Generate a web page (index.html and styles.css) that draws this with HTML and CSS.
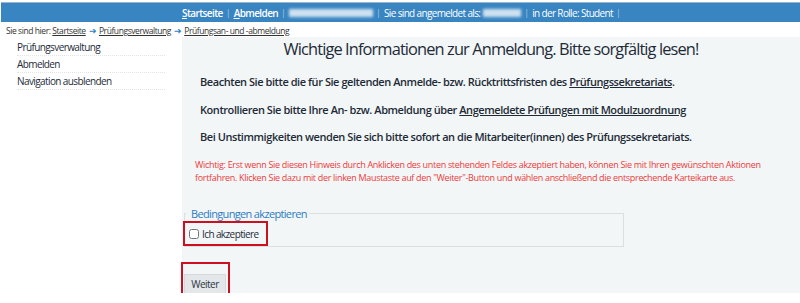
FILE: index.html
```html
<!DOCTYPE html>
<html lang="de">
<head>
  <meta charset="UTF-8" />
  <title>Prüfungsan- und -abmeldung</title>
  <link rel="stylesheet" href="styles.css">
</head>
<body>
  <div class="topbar">
    <a class="toplink" href="#"><u>S</u>tartseite</a>
    <span class="sep">|</span>
    <a class="toplink" href="#"><u>A</u>bmelden</a>
    <span class="sep">|</span>
    <span class="blur wide"></span>
    <span class="sep">|</span>
    <span class="info">Sie sind angemeldet als:</span>
    <span class="blur narrow"></span>
    <span class="sep">|</span>
    <span class="info">in der Rolle: Student</span>
    <span class="sep">|</span>
  </div>

  <div class="crumbs">
    Sie sind hier: <a href="#">Startseite</a>
    <span class="arrow">&#10132;</span> <a href="#">Prüfungsverwaltung</a>
    <span class="arrow">&#10132;</span> <a href="#">Prüfungsan- und -abmeldung</a>
  </div>

  <div class="page">
    <ul class="nav">
      <li>Prüfungsverwaltung</li>
      <li>Abmelden</li>
      <li>Navigation ausblenden</li>
    </ul>

    <div class="content">
      <h1>Wichtige Informationen zur Anmeldung. Bitte sorgfältig lesen!</h1>
      <p class="note">Beachten Sie bitte die für Sie geltenden Anmelde- bzw. Rücktrittsfristen des <a href="#">Prüfungssekretariats</a>.</p>
      <p class="note">Kontrollieren Sie bitte Ihre An- bzw. Abmeldung über <a href="#">Angemeldete Prüfungen mit Modulzuordnung</a></p>
      <p class="note">Bei Unstimmigkeiten wenden Sie sich bitte sofort an die Mitarbeiter(innen) des Prüfungssekretariats.</p>
      <p class="warn">Wichtig: Erst wenn Sie diesen Hinweis durch Anklicken des unten stehenden Feldes akzeptiert haben, können Sie mit Ihren gewünschten Aktionen fortfahren. Klicken Sie dazu mit der linken Maustaste auf den "Weiter"-Button und wählen anschließend die entsprechende Karteikarte aus.</p>

      <fieldset class="terms">
        <legend>Bedingungen akzeptieren</legend>
        <label class="mark"><input type="checkbox"> Ich akzeptiere</label>
      </fieldset>

      <div class="mark btnwrap">
        <button>Weiter</button>
      </div>
    </div>
  </div>
</body>
</html>
```

FILE: styles.css
```css
* {
  box-sizing: border-box;
}

body {
  margin: 0;
  font-family: "Open Sans", sans-serif;
  color: #1e2b37;
  background: #fff;
}

a {
  color: #1e2b37;
}

.topbar {
  margin: 2px 0 0 1px;
  height: 20px;
  background: #3885c1;
  border-top: 1px solid #9db4c9;
  display: flex;
  align-items: center;
  padding-left: 181px;
  color: #fff;
  font-size: 10px;
}

.toplink {
  color: #fff;
  text-decoration: none;
  font-weight: 600;
  letter-spacing: -0.06em;
}

.info {
  letter-spacing: -0.065em;
}

.sep {
  color: #a9c9e4;
  margin: 0 3px;
  font-size: 9px;
}

.blur {
  display: inline-block;
  height: 8px;
  background: #cfe1f0;
  filter: blur(1.5px);
}

.blur.wide {
  width: 84px;
}

.blur.narrow {
  width: 38px;
  margin-left: 3px;
}

.crumbs {
  font-size: 8.5px;
  letter-spacing: -0.05em;
  padding: 3px 0 0 6px;
  height: 15px;
  color: #333;
}

.crumbs a {
  color: #333;
}

.crumbs .arrow {
  color: #2f7ec1;
  margin: 0 1px;
}

.page {
  display: flex;
}

.nav {
  list-style: none;
  margin: 0;
  padding: 2px 0 0 17px;
  width: 182px;
  font-size: 10px;
  letter-spacing: -0.06em;
}

.nav li {
  width: 148px;
  height: 17px;
  line-height: 17px;
  border-bottom: 1px dotted #e1e5e8;
}

.content {
  flex: 1;
  background: #f2f6f7;
  height: 256px;
}

h1 {
  margin: 0;
  padding-top: 1px;
  text-align: center;
  font-size: 16.4px;
  font-weight: 500;
  line-height: 22px;
  letter-spacing: -0.054em;
}

.note {
  margin: 14px 0 0 18px;
  font-size: 11px;
  font-weight: 600;
  line-height: 16px;
  letter-spacing: -0.04em;
}

.note + .note {
  margin-top: 11.5px;
}

.warn {
  margin: 14px 25px 0 13px;
  color: #ee3b3b;
  font-size: 9px;
  line-height: 12.5px;
  letter-spacing: -0.035em;
}

.terms {
  margin: 22px 0 0 2px;
  width: 440px;
  border: 1px solid #dcdfe2;
  padding: 0;
}

.terms legend {
  color: #2d7bc2;
  font-size: 11px;
  line-height: 15px;
  letter-spacing: -0.06em;
  padding: 0 2px 0 5px;
  margin-left: 1px;
}

.mark {
  border: 2px solid #cc1020;
}

.terms label {
  display: flex;
  align-items: center;
  gap: 3px;
  font-size: 10px;
  letter-spacing: -0.06em;
  width: 85px;
  height: 25px;
  padding-left: 4px;
  margin: 0 0 0 -2px;
}

.terms input {
  margin: 0;
  width: 10px;
  height: 10px;
}

.btnwrap {
  width: 49px;
  height: 38px;
  margin: 15px 0 0 -1px;
  padding: 7px 0 0 1px;
}

button {
  font-family: inherit;
  font-size: 10px;
  letter-spacing: -0.05em;
  color: #2a3540;
  background: #e3e7ea;
  border: 1px solid #d5dadd;
  width: 42px;
  height: 20px;
  padding: 0;
}
```
